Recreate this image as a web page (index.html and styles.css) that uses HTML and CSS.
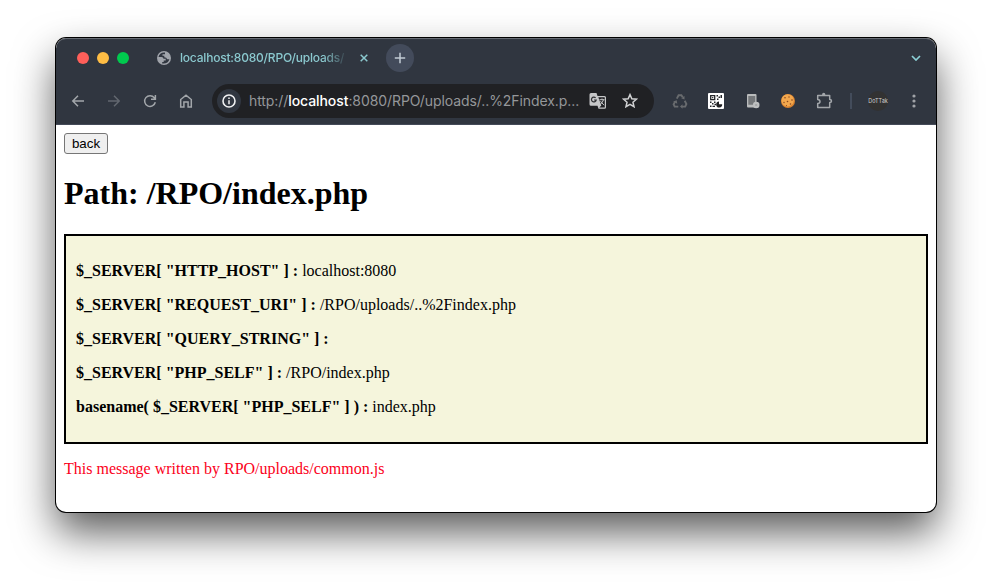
FILE: index.html
```html
<!DOCTYPE html>
<html lang="en">
<head>
<meta charset="utf-8">
<title>localhost:8080/RPO/uploads/</title>
<link rel="stylesheet" href="styles.css">
</head>
<body>
<div class="window">
  <header class="chrome">
    <div class="tabs">
      <div class="lights"><i class="red"></i><i class="yellow"></i><i class="green"></i></div>
      <svg class="globe" width="14" height="14" viewBox="0 0 14 14"><circle cx="7" cy="7" r="7" fill="#a0a4ab"/><path d="M8 1.500C4.600 1.100 2 3.200 1.500 6H4.500Q6.500 6 6.500 7.700H8.700V9.400H6.700V11H5.200V12.400C8.500 13.200 11.700 11.300 12.400 8.200H10.200Q9.600 6.300 7.300 6.300V4.700H5.500V3.200H8Z" fill="#303640"/></svg>
      <span class="tab-title">localhost:8080/RPO/uploads/</span>
      <svg class="close" width="8" height="8" viewBox="0 0 8 8"><path d="M.7.7l6.6 6.6M7.3.7L.7 7.3" stroke="#8bc9cf" stroke-width="1.5"/></svg>
      <span class="new-tab"><svg width="12" height="12" viewBox="0 0 12 12"><path d="M6 .8v10.4M.8 6h10.4" stroke="#c2cbd5" stroke-width="1.5"/></svg></span>
      <svg class="chevron" width="10" height="6" viewBox="0 0 10 6"><path d="M1 1l4 4 4-4" fill="none" stroke="#8bd0d6" stroke-width="1.7"/></svg>
    </div>
    <div class="toolbar">
      <span class="cell"><svg width="14" height="14" viewBox="0 0 14 14" class="line"><path d="M13 7H1.8M7 1.8L1.800 7L7 12.200"/></svg></span>
      <span class="cell"><svg width="14" height="14" viewBox="0 0 14 14" class="line dim"><path d="M1 7h11.2M7 1.800L12.200 7L7 12.200"/></svg></span>
      <span class="cell"><svg width="14" height="14" viewBox="0 0 14 14" class="line"><path d="M12.300 8.300A5.400 5.400 0 1 1 11.300 3.700L12.400 5M12.400 1v4.300H8"/></svg></span>
      <span class="cell"><svg width="14" height="14" viewBox="0 0 14 14" class="line"><path d="M1.700 13.100V5.500L7 1.100l5.300 4.400v7.600H9.100V8H4.900v5.100Z"/></svg></span>
      <div class="omnibox">
        <span class="info"><svg width="14" height="14" viewBox="0 0 14 14"><circle cx="7" cy="7" r="6" fill="none" stroke="#f0f1f2" stroke-width="1.6"/><path d="M7 6.2v4.1M7 3.5v1.6" stroke="#f0f1f2" stroke-width="1.5"/></svg></span>
        <span class="url">http://<b>localhost</b>:8080/RPO/uploads/..%2Findex.p...</span>
        <svg class="translate" width="18" height="18" viewBox="0 0 18 18"><path d="M2 1h5.500l1 3H15.500q1.500 0 1.500 1.500v9.700q0 1.500-1.500 1.500H9.500l-1-3H2Q.5 13.700.5 12.200V2.500Q.5 1 2 1Z" fill="#c6c7c8"/><path d="M9.300 5.200h6q.5 0 .5.500v9.300q0 .5-.5.500h-5l2-2.100Z" fill="#202124"/><path d="M10.500 7.700h5M13 6.500v1.200M14.500 7.700Q13.500 11 11.200 12.400M11.500 9.200l3.500 4" fill="none" stroke="#c6c7c8"/><path d="M6.600 5.800A2.400 2.400 0 1 0 7.200 8H5" fill="none" stroke="#303134" stroke-width="1.200"/></svg>
        <svg class="star" width="16" height="16" viewBox="0 0 16 16"><path d="M8 1.600l1.850 4.200 4.600.42-3.480 3.030 1.040 4.500L8 11.350l-4.010 2.400 1.040-4.500L1.550 6.220l4.600-.42Z" fill="none" stroke="#d0d1d2" stroke-width="1.500"/></svg>
      </div>
      <span class="cell"><svg width="16" height="16" viewBox="0 0 16 16"><path d="M4.800 5.600L6.600 2.200h2.800l1.300 2M12.700 7.800l1.700 3.200-1.200 2.600H10M6.300 13.600H2.700L1.600 11.200l1.500-2.600" fill="none" stroke="#686b6e" stroke-width="1.900"/><path d="M12.500 2.900v3.600L9.200 5.300ZM10.500 11.200v4.600L8 13.500ZM1.100 8.600l3.600-1.400.6 3.500Z" fill="#686b6e"/></svg></span>
      <span class="cell"><svg width="16" height="16" viewBox="0 0 16 16"><rect width="16" height="16" rx="1" fill="#fff"/><path d="M2.700 2.700h4v4h-4Z" fill="none" stroke="#25272a" stroke-width="1.300"/><path d="M4.100 4.100h1.200v1.200H4.100ZM8.500 2h1.500v1.500H8.500ZM10.500 3.500H12V5h-1.500ZM12.500 2H14v3h-1.500ZM9 5.500h1.500V7H9ZM2 8.500h1.500V10H2ZM4 10h1.500v1.500H4ZM6 8.500h1.500V10H6ZM2 12.500h1.500V14H2ZM4.500 12.700H7V14H4.500ZM6.500 10.700H8v1.500H6.500Z" fill="#25272a"/><path d="M11 8.500v2.800h3.200A3 3 0 1 1 11 8.500Z" fill="#202124"/></svg></span>
      <span class="cell"><svg width="16" height="16" viewBox="0 0 16 16"><rect x="3" y="1" width="9.500" height="13.500" rx="1" fill="#b9bbbc"/><path d="M4.300 3h6.900v8.700H4.300Z" fill="#74777a"/><circle cx="12.200" cy="12" r="3.300" fill="#bdbfc0"/><path d="M11.200 12h2" stroke="#8c8e90"/></svg></span>
      <span class="cell"><svg width="16" height="16" viewBox="0 0 16 16"><circle cx="8" cy="8" r="7" fill="#d9822e"/><circle cx="7.600" cy="7.400" r="6.200" fill="#f2a84e"/><g fill="#87451e"><circle cx="5" cy="4.800" r=".8"/><circle cx="9" cy="4" r=".7"/><circle cx="12" cy="7" r=".8"/><circle cx="7.500" cy="8.500" r=".8"/><circle cx="4" cy="9.500" r=".7"/><circle cx="10.500" cy="11" r=".8"/><circle cx="6.500" cy="12.500" r=".6"/></g></svg></span>
      <span class="cell"><svg width="18" height="18" viewBox="0 0 18 18"><path d="M2.700 3.500h12v4q1.800 0 1.800 1.500t-1.800 1.500v5h-12v-4Q5 11.400 5 9.500T2.700 7.400Z" fill="none" stroke="#a2a6aa" stroke-width="1.500" stroke-linejoin="round"/><path d="M7 3Q7 .8 8.700.8T10.400 3Z" fill="#a2a6aa"/></svg></span>
      <span class="sep"></span>
      <span class="cell"><span class="avatar">DoTTak</span></span>
      <span class="cell"><svg width="4" height="14" viewBox="0 0 4 14" fill="#a0a3a7"><circle cx="2" cy="2" r="1.600"/><circle cx="2" cy="7" r="1.600"/><circle cx="2" cy="12" r="1.600"/></svg></span>
    </div>
  </header>
  <main class="page">
    <button class="back">back</button>
    <h1>Path: /RPO/index.php</h1>
    <div class="server">
      <p><b>$_SERVER[ "HTTP_HOST" ] :</b> localhost:8080</p>
      <p><b>$_SERVER[ "REQUEST_URI" ] :</b> /RPO/uploads/..%2Findex.php</p>
      <p><b>$_SERVER[ "QUERY_STRING" ] :</b></p>
      <p><b>$_SERVER[ "PHP_SELF" ] :</b> /RPO/index.php</p>
      <p><b>basename( $_SERVER[ "PHP_SELF" ] ) :</b> index.php</p>
    </div>
    <p class="message">This message written by RPO/uploads/common.js</p>
  </main>
</div>
</body>
</html>
```
FILE: styles.css
```css
* { box-sizing: border-box; }
html { background: #fff; overflow: hidden; }
body { margin: 0; padding: 38px 56px 74px; height: 586px; }
svg { display: block; flex: none; }
.window {
  height: 474px;
  border-radius: 10px;
  background: #fff;
  overflow: hidden;
  box-shadow: 0 0 0 1px #000, 0 20px 42px rgba(0, 0, 0, .65);
}
.chrome {
  height: 87px;
  background: #303640;
  border-bottom: 1px solid #444a58;
  border-radius: 10px 10px 0 0;
  box-shadow: inset 0 1px 0 #656a72;
}
.tabs { display: flex; align-items: center; height: 40px; padding: 0 15px 0 21px; }
.lights { display: flex; gap: 8px; margin-right: 28px; }
.lights i { width: 12px; height: 12px; border-radius: 50%; }
.red { background: #ff5f5a; }
.yellow { background: #ffbd44; }
.green { background: #00ca4e; }
.tab-title {
  width: 168px;
  margin: 0 -2px 0 9px;
  overflow: hidden;
  white-space: nowrap;
  font: 500 12px/16px Inter, sans-serif;
  letter-spacing: -.2px;
  color: #8bc9cf;
  -webkit-mask-image: linear-gradient(90deg, #000 85%, transparent);
  mask-image: linear-gradient(90deg, #000 85%, transparent);
}
.close { margin-left: 14px; }
.new-tab {
  display: grid;
  place-items: center;
  width: 28px;
  height: 28px;
  margin-left: 18px;
  border-radius: 50%;
  background: #434b5b;
}
.chevron { margin-left: auto; }
.toolbar { display: flex; align-items: center; height: 46px; padding: 0 4px; }
.cell { display: grid; place-items: center; flex: none; width: 36px; height: 34px; }
.line { fill: none; stroke: #a2a6aa; stroke-width: 1.5; }
.dim { stroke: #62676f; }
.omnibox {
  display: flex;
  align-items: center;
  width: 442px;
  height: 34px;
  margin: 0 8px;
  padding: 0 16px 0 5px;
  border-radius: 17px;
  background: #202124;
}
.info {
  display: grid;
  place-items: center;
  width: 24px;
  height: 24px;
  border-radius: 50%;
  background: #303640;
}
.url {
  width: 332px;
  margin-left: 8px;
  white-space: nowrap;
  font: 14px/18px Inter, sans-serif;
  letter-spacing: -.08px;
  color: #95979a;
}
.url b { font-weight: 500; color: #fff; }
.translate { margin-left: 8px; }
.star { margin-left: auto; }
.sep { width: 2px; height: 16px; margin: 0 8px; background: #434c5b; }
.avatar {
  display: grid;
  place-items: center;
  width: 20px;
  height: 20px;
  border-radius: 50%;
  background: #323232;
  color: #d0d0d0;
  font: 5.5px/8px Inter, sans-serif;
}
.page { padding: 8px; font: 16px/18px "Liberation Serif", serif; color: #000; }
.back {
  display: block;
  width: 44px;
  height: 21px;
  padding: 0;
  border: 1px solid #767676;
  border-radius: 3px;
  background: #efefef;
  color: #000;
  font: 13.33px/15px "Liberation Sans", sans-serif;
}
h1 { margin: 21px 0 22px; font-size: 32px; line-height: 37px; }
.server { height: 210px; padding: 10px; border: 2px solid #000; background: #f5f5dc; }
.server p { margin: 16px 0; }
.message { margin: 16px 0; color: #fb0020; }
```
